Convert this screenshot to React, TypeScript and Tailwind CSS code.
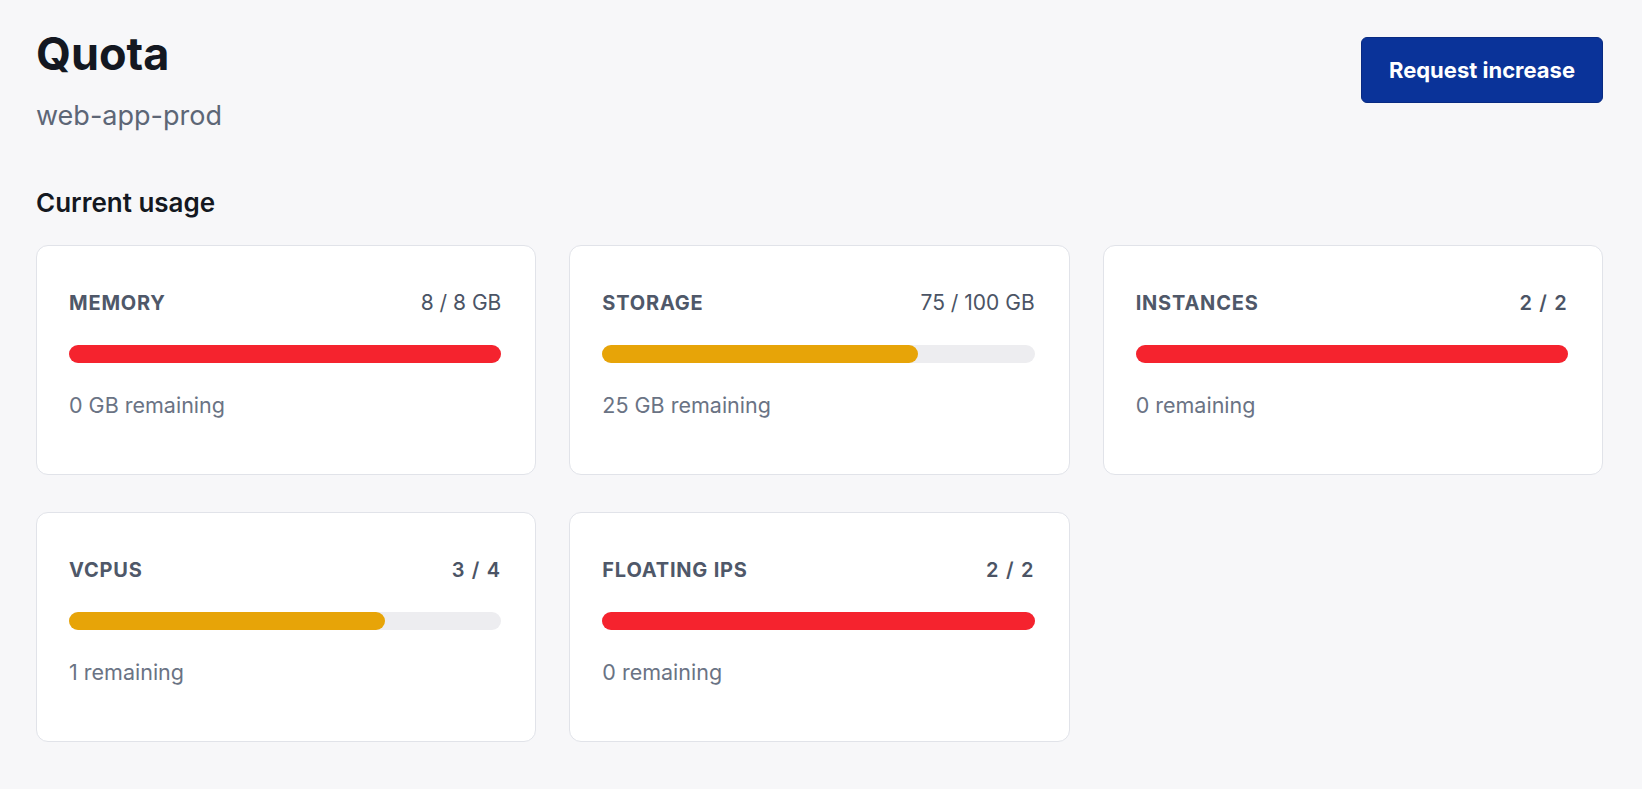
import React from "react"

type Quota = {
  label: string
  usage: string
  remaining: string
  fill: number
  level: "full" | "warn"
  plain?: boolean
}

const QUOTAS: Quota[] = [
  { label: "Memory", usage: "8 / 8 GB", remaining: "0 GB remaining", fill: 100, level: "full" },
  { label: "Storage", usage: "75 / 100 GB", remaining: "25 GB remaining", fill: 73, level: "warn" },
  { label: "Instances", usage: "2 / 2", remaining: "0 remaining", fill: 100, level: "full", plain: true },
  { label: "vCPUs", usage: "3 / 4", remaining: "1 remaining", fill: 73, level: "warn", plain: true },
  { label: "Floating IPs", usage: "2 / 2", remaining: "0 remaining", fill: 100, level: "full", plain: true },
]

function QuotaCard({ q }: { q: Quota }) {
  return (
    <div className="h-[230px] rounded-xl border border-[#e1e3e9] bg-white pl-8 pr-[34px] pt-[43px]">
      <div className="flex items-baseline justify-between">
        <span className="text-[20px] leading-7 font-bold uppercase tracking-[0.04em] text-[#4f5869]">
          {q.label}
        </span>
        <span
          className={`text-[20px] leading-7 text-[#4b5465] ${
            q.plain ? "font-semibold tracking-[0.06em]" : "text-[21px] font-normal"
          }`}
        >
          {q.usage}
        </span>
      </div>
      <div className="mt-7 h-[18px] w-full rounded-full bg-[#ededf0]">
        <div
          className={`h-full rounded-full ${q.level === "full" ? "bg-[#f5232e]" : "bg-[#e7a408]"}`}
          style={{ width: `${q.fill}%` }}
        />
      </div>
      <p className="mt-7 text-[21.5px] leading-7 text-[#6a7384]">{q.remaining}</p>
    </div>
  )
}

export default function App() {
  return (
    <div className="min-h-screen bg-[#f7f7f9] pl-9 pr-[39px] pt-8 font-['Inter',sans-serif]">
      <div className="flex items-start justify-between">
        <div>
          <h1 className="text-[45px] leading-[44px] font-bold text-[#141821]">Quota</h1>
          <p className="mt-[22px] text-[27px] leading-9 text-[#5d6676]">web-app-prod</p>
        </div>
        <button className="mt-[5px] h-[66px] w-[242px] rounded-md border border-[#082a82] bg-[#0a3399] text-[22px] font-bold text-white">
          Request increase
        </button>
      </div>

      <h2 className="mt-[53px] text-[26px] leading-8 font-semibold text-[#141821]">Current usage</h2>

      <div className="mt-[26px] grid grid-cols-3 gap-x-[33px] gap-y-[37px]">
        {QUOTAS.map((q) => (
          <QuotaCard key={q.label} q={q} />
        ))}
      </div>
    </div>
  )
}
